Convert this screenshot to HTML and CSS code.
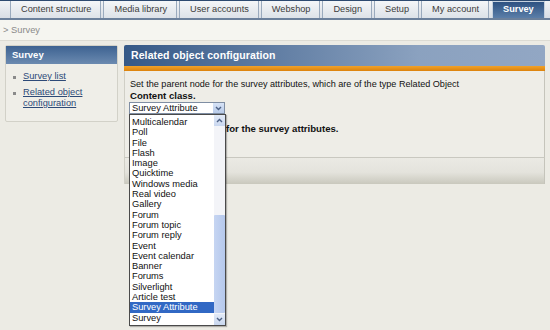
FILE: index.html
```html
<!DOCTYPE html>
<html>
<head>
<meta charset="utf-8">
<link rel="stylesheet" href="styles.css">
</head>
<body>
<div class="topnav">
  <a class="tab">Content structure</a>
  <a class="tab">Media library</a>
  <a class="tab">User accounts</a>
  <a class="tab">Webshop</a>
  <a class="tab">Design</a>
  <a class="tab">Setup</a>
  <a class="tab">My account</a>
  <a class="tab active">Survey</a>
</div>
<div class="crumb">&gt; Survey</div>
<div class="main">
  <div class="side">
    <div class="side-h">Survey</div>
    <ul class="menu">
      <li><a>Survey list</a></li>
      <li><a>Related object configuration</a></li>
    </ul>
  </div>
  <div class="content">
    <div class="content-h">Related object configuration</div>
    <div class="orange"></div>
    <div class="body">
      <p class="line">Set the parent node for the survey attributes, which are of the type Related Object</p>
      <p class="line bold">Content class.</p>
      <div class="selectwrap">
        <div class="select">
          <span class="sel-text">Survey Attribute</span>
          <span class="sel-btn"><svg width="7" height="5" viewBox="0 0 7 5"><polyline points="1,1 3.5,3.5 6,1" fill="none" stroke="#4d6185" stroke-width="1.4"/></svg></span>
        </div>
        <div class="list">
          <div class="items">
            <div>Multicalendar</div>
            <div>Poll</div>
            <div>File</div>
            <div>Flash</div>
            <div>Image</div>
            <div>Quicktime</div>
            <div>Windows media</div>
            <div>Real video</div>
            <div>Gallery</div>
            <div>Forum</div>
            <div>Forum topic</div>
            <div>Forum reply</div>
            <div>Event</div>
            <div>Event calendar</div>
            <div>Banner</div>
            <div>Forums</div>
            <div>Silverlight</div>
            <div>Article test</div>
            <div class="hl">Survey Attribute</div>
            <div>Survey</div>
          </div>
          <div class="scroll">
            <span class="arrow"><svg width="7" height="5" viewBox="0 0 7 5"><polyline points="1,4 3.5,1.5 6,4" fill="none" stroke="#4d6185" stroke-width="1.4"/></svg></span>
            <span class="track"><span class="thumb"></span></span>
            <span class="arrow"><svg width="7" height="5" viewBox="0 0 7 5"><polyline points="1,1 3.5,3.5 6,1" fill="none" stroke="#4d6185" stroke-width="1.4"/></svg></span>
          </div>
        </div>
      </div>
      <p class="line bold parent">for the survey attributes.</p>
    </div>
    <div class="foot"></div>
  </div>
</div>
</body>
</html>
```
FILE: styles.css
```css
* { box-sizing: border-box; }
html { background: #ecebe4; }
body {
  margin: 0;
  min-height: 330px;
  background: #ecebe4;
  font-family: "Liberation Sans", Arial, sans-serif;
  color: #111;
}
.topnav {
  display: flex;
  gap: 2px;
  height: 20px;
  padding-left: 10px;
  border-top: 1px solid #2d4a70;
  border-bottom: 2px solid #6b809b;
  background: linear-gradient(#f1f3f6, #d9dee5);
}
.tab {
  padding: 0 9px 0 10px;
  line-height: 17px;
  font-size: 9.2px;
  color: #3c3c3c;
  border-left: 1px solid #9aaabd;
  border-right: 1px solid #9aaabd;
  background: linear-gradient(#f4f6f8, #dde2e8);
  white-space: nowrap;
}
.tab.active {
  margin-left: 1px;
  background: linear-gradient(#2e5282, #5b7ea8);
  color: #fff;
  font-weight: bold;
  border-color: #c6d1de;
  border-top: 1px solid #c6d1de;
  line-height: 15px;
  padding: 0 10px;
}
.crumb {
  height: 21px;
  line-height: 20px;
  padding-left: 3px;
  background: #f5f5f0;
  border-bottom: 1px solid #dcdbd3;
  font-size: 9.3px;
  color: #8a8a8a;
}
.main {
  display: flex;
  gap: 6px;
  padding: 4px 5px 0 5px;
}
.side {
  width: 113px;
  flex: none;
  align-self: flex-start;
  background: #efeee8;
  border: 1px solid #d2d1c8;
  border-radius: 2px;
}
.side-h {
  height: 18px;
  line-height: 17px;
  padding-left: 6px;
  background: linear-gradient(#3d6291, #6b8ab0);
  color: #fff;
  font-weight: bold;
  font-size: 9.5px;
}
.menu {
  list-style: none;
  margin: 0;
  padding: 7px 0 12px 6px;
}
.menu li {
  position: relative;
  padding-left: 11px;
  line-height: 11px;
  font-size: 9.3px;
  margin-bottom: 5px;
}
.menu li:last-child { margin-bottom: 0; }
.menu li::before {
  content: "";
  position: absolute;
  left: 1px;
  top: 5px;
  width: 3px;
  height: 3px;
  background: #8a8a8a;
}
.menu a {
  color: #2d4a78;
  text-decoration: underline;
}
.content {
  flex: 1;
}
.content-h {
  height: 21px;
  line-height: 21px;
  padding-left: 7px;
  background: linear-gradient(90deg, rgba(47,83,130,0.9), rgba(142,164,193,0.9) 70%, rgba(150,170,198,0.9)), #6d8ab0;
  border-radius: 2px 2px 0 0;
  color: #fff;
  font-weight: bold;
  font-size: 10.5px;
  letter-spacing: 0.1px;
}
.orange {
  height: 5px;
  background: linear-gradient(#f0a22a, #dc820c);
}
.body {
  position: relative;
  padding: 8px 6px 23px 5px;
  background: #eeede7;
  border-left: 1px solid #d0cfc6;
  border-right: 1px solid #c5c4bb;
}
.line {
  margin: 0;
  line-height: 11px;
  font-size: 9.1px;
}
.bold { font-weight: bold; font-size: 9.6px; }
.parent {
  margin-top: 9px;
  padding-left: 96px;
}
.selectwrap {
  position: relative;
  width: 96px;
  margin-top: 1px;
  margin-left: -1px;
}
.select {
  display: flex;
  height: 12px;
  background: #fff;
  border: 1px solid #7f8ea3;
}
.sel-text {
  flex: 1;
  font-size: 9.3px;
  line-height: 10px;
  padding-left: 2px;
}
.sel-btn {
  width: 11px;
  display: flex;
  align-items: center;
  justify-content: center;
  background: linear-gradient(#d7e3f6, #b8cbe9);
}
.list {
  position: absolute;
  top: 100%;
  left: 0;
  width: 97px;
  height: 212px;
  display: flex;
  background: #fff;
  border: 1px solid #4a4a4a;
  box-shadow: 1px 1px 1px rgba(0,0,0,0.25);
  z-index: 5;
}
.items {
  flex: 1;
  padding-top: 2px;
  font-size: 9.3px;
  line-height: 10.3px;
}
.items div { padding-left: 2px; }
.items .hl {
  background: #3168c4;
  color: #fff;
}
.scroll {
  width: 11px;
  display: flex;
  flex-direction: column;
  background: #f3f4f8;
}
.arrow {
  height: 11px;
  display: flex;
  align-items: center;
  justify-content: center;
  background: linear-gradient(#e2eaf7, #c9d7ef);
}
.track {
  flex: 1;
  display: flex;
  flex-direction: column;
  justify-content: flex-end;
  padding-bottom: 1px;
}
.thumb {
  height: 98px;
  background: linear-gradient(90deg, #c6d5f2, #b5c8ec);
  border-radius: 1px;
}
.foot {
  height: 27px;
  border-top: 1px solid #c9c8c0;
  border-left: 1px solid #d0cfc6;
  border-right: 1px solid #c5c4bb;
  background: linear-gradient(#ebeae4 0%, #e4e3dc 55%, #c9c8bd 100%);
}
```
